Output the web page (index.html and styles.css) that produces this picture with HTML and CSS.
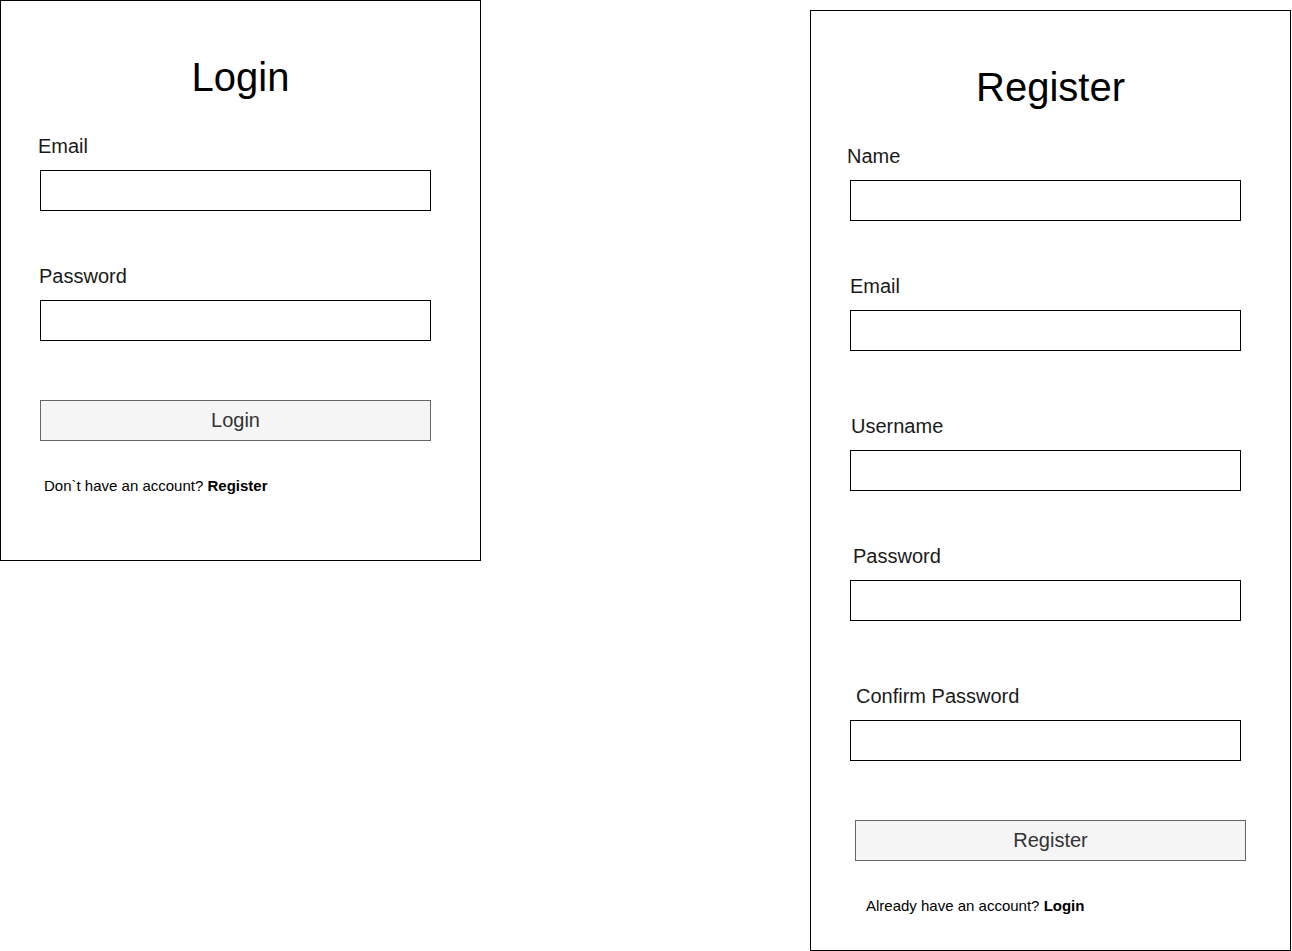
FILE: index.html
```html
<!DOCTYPE html>
<html lang="en">
<head>
<meta charset="utf-8">
<title>Login / Register wireframe</title>
<link rel="stylesheet" href="styles.css">
</head>
<body>
<div class="canvas">
  <section class="card card-login">
    <h1 class="title">Login</h1>
    <div class="field field-first">
      <label class="label ml-37">Email</label>
      <div class="input"></div>
    </div>
    <div class="field gap-53">
      <label class="label ml-38">Password</label>
      <div class="input"></div>
    </div>
    <div class="button ml-39">Login</div>
    <p class="footer ml-43">Don`t have an account? <b>Register</b></p>
  </section>

  <section class="card card-register">
    <h1 class="title">Register</h1>
    <div class="field field-first">
      <label class="label ml-36">Name</label>
      <div class="input"></div>
    </div>
    <div class="field gap-53">
      <label class="label ml-39">Email</label>
      <div class="input"></div>
    </div>
    <div class="field gap-63">
      <label class="label ml-40">Username</label>
      <div class="input"></div>
    </div>
    <div class="field gap-53">
      <label class="label ml-42">Password</label>
      <div class="input"></div>
    </div>
    <div class="field gap-63">
      <label class="label ml-45">Confirm Password</label>
      <div class="input"></div>
    </div>
    <div class="button ml-44">Register</div>
    <p class="footer ml-55">Already have an account? <b>Login</b></p>
  </section>
</div>
</body>
</html>
```

FILE: styles.css
```css
html, body {
  margin: 0;
  padding: 0;
  background: #ffffff;
}

body {
  font-family: "Liberation Sans", Arial, Helvetica, sans-serif;
  color: #000;
}

.canvas {
  width: 1292px;
  height: 951px;
  display: flex;
  align-items: flex-start;
}

.card {
  box-sizing: border-box;
  width: 481px;
  border: 1px solid #000;
  background: #fff;
  display: flex;
  flex-direction: column;
  align-items: flex-start;
}

.card-login {
  height: 561px;
}

.card-register {
  height: 941px;
  margin-left: 329px;
  margin-top: 10px;
}

.title {
  align-self: stretch;
  margin: 53px 0 0 0;
  font-size: 40px;
  line-height: 46px;
  font-weight: normal;
  text-align: center;
  color: #000;
}

.field {
  display: flex;
  flex-direction: column;
  align-items: flex-start;
}

.field-first { margin-top: 34px; }
.gap-53 { margin-top: 53px; }
.gap-63 { margin-top: 63px; }

.label {
  display: block;
  font-size: 20px;
  line-height: 24px;
  height: 24px;
  color: #1a1a1a;
  white-space: nowrap;
}

.input {
  box-sizing: border-box;
  width: 391px;
  height: 41px;
  margin: 12px 0 0 39px;
  border: 1px solid #000;
  background: #fff;
}

.button {
  box-sizing: border-box;
  width: 391px;
  height: 41px;
  margin-top: 59px;
  border: 1px solid #666666;
  background: #f5f5f5;
  color: #333333;
  font-size: 20px;
  line-height: 39px;
  text-align: center;
}

.footer {
  margin: 36px 0 0 0;
  font-size: 15px;
  line-height: 17px;
  color: #000;
  white-space: nowrap;
}

.footer b {
  font-weight: bold;
}

.ml-36 { margin-left: 36px; }
.ml-37 { margin-left: 37px; }
.ml-38 { margin-left: 38px; }
.ml-39 { margin-left: 39px; }
.ml-40 { margin-left: 40px; }
.ml-42 { margin-left: 42px; }
.ml-43 { margin-left: 43px; }
.ml-44 { margin-left: 44px; }
.ml-45 { margin-left: 45px; }
.ml-55 { margin-left: 55px; }
```
